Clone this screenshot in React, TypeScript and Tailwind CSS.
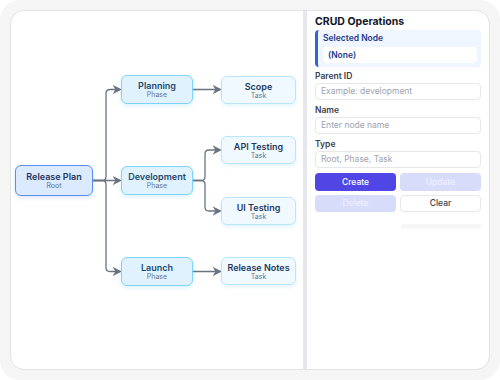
import React from 'react';

type Kind = 'root' | 'phase' | 'task';

const nodes: { id: string; label: string; sub: string; kind: Kind; x: number; y: number }[] = [
  { id: 'release', label: 'Release Plan', sub: 'Root', kind: 'root', x: 4, y: 154 },
  { id: 'planning', label: 'Planning', sub: 'Phase', kind: 'phase', x: 110, y: 64 },
  { id: 'development', label: 'Development', sub: 'Phase', kind: 'phase', x: 110, y: 155 },
  { id: 'launch', label: 'Launch', sub: 'Phase', kind: 'phase', x: 110, y: 246 },
  { id: 'scope', label: 'Scope', sub: 'Task', kind: 'task', x: 210, y: 65 },
  { id: 'api', label: 'API Testing', sub: 'Task', kind: 'task', x: 210, y: 125 },
  { id: 'ui', label: 'UI Testing', sub: 'Task', kind: 'task', x: 210, y: 186 },
  { id: 'notes', label: 'Release Notes', sub: 'Task', kind: 'task', x: 210, y: 246 },
];

const edges = [
  'M82 169.5 L91 169.5 Q95 169.5 95 165.5 L95 82.5 Q95 78.5 99 78.5 L109 78.5',
  'M82 169.5 L109 169.5',
  'M82 169.5 L91 169.5 Q95 169.5 95 173.5 L95 256.5 Q95 260.5 99 260.5 L109 260.5',
  'M182 78.5 L209 78.5',
  'M182 169.5 L190 169.5 Q194 169.5 194 165.5 L194 143 Q194 139 198 139 L209 139',
  'M182 169.5 L190 169.5 Q194 169.5 194 173.5 L194 196 Q194 200 198 200 L209 200',
  'M182 260.5 L209 260.5',
];

function Node({ label, sub, kind, x, y }: { label: string; sub: string; kind: Kind; x: number; y: number }) {
  const style =
    kind === 'root'
      ? 'w-[78px] h-[31px] bg-[#dbeafe] border-[#5b8def] text-[#27365e] shadow-[0_2px_4px_rgba(59,130,246,0.18)]'
      : kind === 'phase'
        ? 'w-[72px] h-[29px] bg-[#e0f2fe] border-[#7dd3fc] text-[#1e4a70] shadow-[0_2px_4px_rgba(14,165,233,0.15)]'
        : 'w-[75px] h-[28px] bg-[#f0f9ff] border-[#bae6fd] text-[#1e3a5f] shadow-[0_2px_4px_rgba(14,165,233,0.12)]';
  return (
    <div
      className={`absolute flex flex-col items-center justify-center rounded-[6px] border ${style}`}
      style={{ left: x, top: y }}
    >
      <div className="text-[9px] font-semibold leading-[11px]">{label}</div>
      <div className="text-[7px] leading-[8px] text-[#64748b]">{sub}</div>
    </div>
  );
}

function Field({ label, placeholder }: { label: string; placeholder: string }) {
  return (
    <div className="flex flex-col">
      <div className="text-[8.5px] font-semibold text-[#374151] leading-[11px] mb-[1px]">{label}</div>
      <div className="h-[17px] rounded-[4px] border border-[#e5e7eb] bg-white px-[5px] flex items-center text-[8.5px] text-[#9ca3af]">
        {placeholder}
      </div>
    </div>
  );
}

export default function App() {
  return (
    <div className="w-[500px] h-[380px] bg-white" style={{ fontFamily: 'Inter, "Noto Sans", sans-serif' }}>
      <div className="h-full rounded-[20px] bg-[#f5f5f5] p-[10px]">
        <div className="h-full flex rounded-[14px] border border-[#e3e3e3] bg-white overflow-hidden">
          {/* Canvas */}
          <div className="relative flex-1">
            <svg className="absolute inset-0" width="291" height="358">
              <defs>
                <marker id="arrow" viewBox="0 0 10 10" refX="8" refY="5" markerWidth="7" markerHeight="7" orient="auto">
                  <path d="M0 0 L10 5 L0 10 L3 5 Z" fill="#6b7280" />
                </marker>
              </defs>
              {edges.map((d, i) => (
                <path key={i} d={d} fill="none" stroke="#6b7280" strokeWidth="1.3" markerEnd="url(#arrow)" />
              ))}
            </svg>
            {nodes.map((n) => (
              <Node key={n.id} {...n} />
            ))}
          </div>

          <div className="w-[4px] bg-[#e5e7eb]" />

          {/* CRUD panel */}
          <div className="w-[182px] pl-[8px] pr-[8px] pt-[4px] flex flex-col">
            <div className="text-[10.5px] font-bold text-[#111827] leading-[14px]">CRUD Operations</div>
            <div className="mt-[1px] rounded-[4px] border-l-[3px] border-[#2f63e0] bg-[#eff6ff] pl-[5px] pr-[4px] pt-[3px] pb-[4px]">
              <div className="text-[8.5px] font-semibold text-[#1e3a8a] leading-[11px] mb-[3px]">Selected Node</div>
              <div className="h-[16px] rounded-[4px] bg-white px-[5px] flex items-center text-[8.5px] font-semibold text-[#1e3a8a]">
                (None)
              </div>
            </div>
            <div className="mt-[4px] flex flex-col gap-[5px]">
              <Field label="Parent ID" placeholder="Example: development" />
              <Field label="Name" placeholder="Enter node name" />
              <Field label="Type" placeholder="Root, Phase, Task" />
            </div>
            <div className="mt-[5px] grid grid-cols-2 gap-x-[4px] gap-y-[4px]">
              <div className="h-[18px] rounded-[4px] bg-[#4f46e5] flex items-center justify-center text-[8.5px] font-medium text-white">Create</div>
              <div className="h-[18px] rounded-[4px] bg-[#d8dcfb] flex items-center justify-center text-[8.5px] font-medium text-[#eef0ff]">Update</div>
              <div className="h-[17px] rounded-[4px] bg-[#d8dcfb] flex items-center justify-center text-[8.5px] font-medium text-[#eef0ff]">Delete</div>
              <div className="h-[17px] rounded-[4px] border border-[#e5e7eb] bg-white flex items-center justify-center text-[8.5px] font-medium text-[#374151]">Clear</div>
            </div>
            <div className="mt-[12px] ml-auto w-[80px] h-[5px] rounded-[2px] bg-[#f7f7f8]" />
          </div>
        </div>
      </div>
    </div>
  );
}
